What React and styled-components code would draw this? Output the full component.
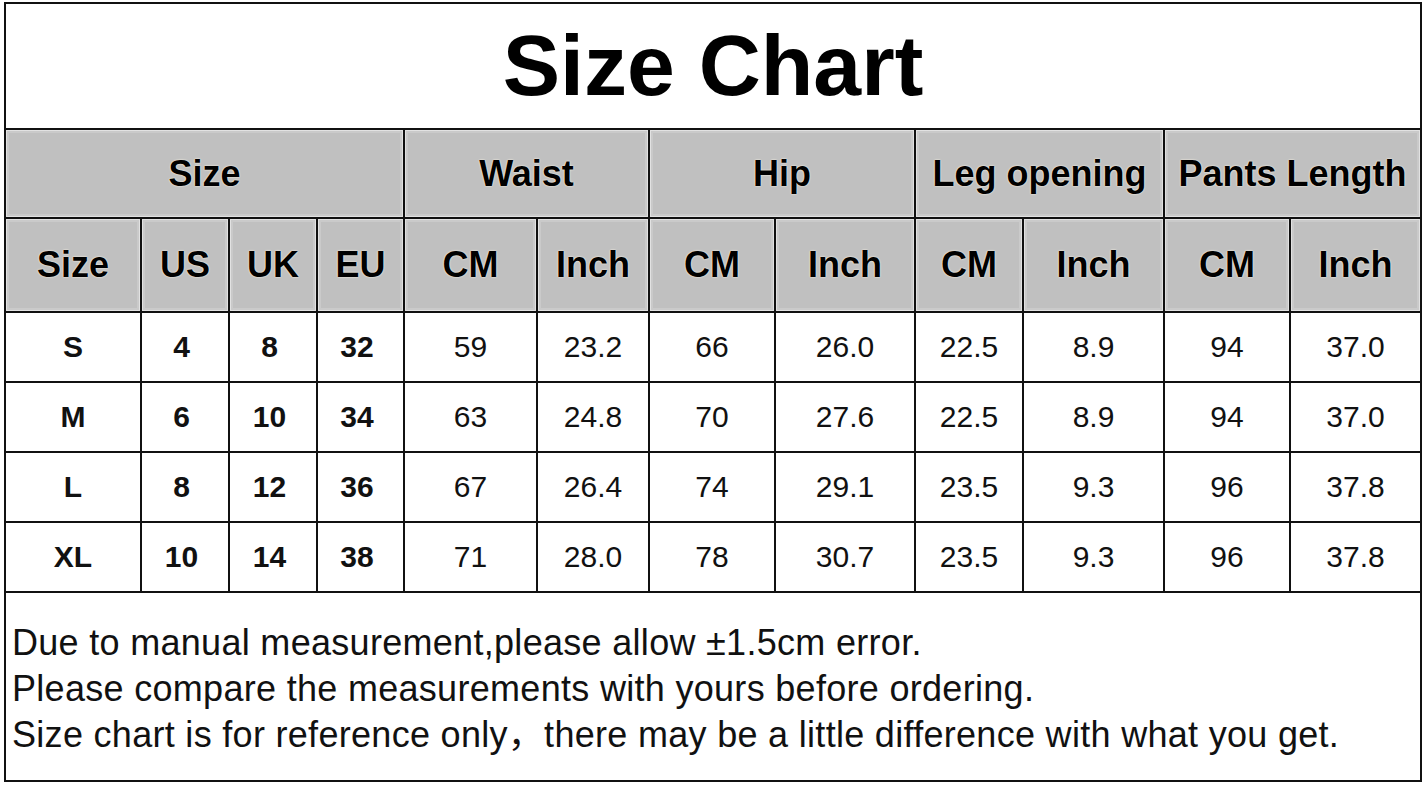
import React from 'react';
import styled, { createGlobalStyle } from 'styled-components';

const GlobalStyle = createGlobalStyle`
  html, body {
    margin: 0;
    padding: 0;
    background: #fff;
  }
  body {
    font-family: "Liberation Sans", Arial, "Noto Sans CJK SC", sans-serif;
    color: #000;
  }
`;

const Chart = styled.div`
  width: 1414px;
  margin: 2px 0 0 4px;
  border: 2px solid #111;
  background: #fff;
`;

const Title = styled.h1`
  margin: 0;
  height: 124px;
  display: flex;
  align-items: center;
  justify-content: center;
  font-size: 86px;
  font-weight: 700;
  padding-bottom: 2px;
  box-sizing: border-box;
`;

const Table = styled.div`
  display: grid;
  grid-template-columns: 134px 86px 86px 85px 131px 110px 124px 138px 106px 139px 124px 129px;
  grid-template-rows: 87px 92px 68px 68px 68px 68px;
  gap: 2px;
  background: #111;
  border-top: 2px solid #111;
  border-bottom: 2px solid #111;
`;

const HeadCell = styled.div`
  grid-column: span ${(p) => p.span || 1};
  display: flex;
  align-items: center;
  justify-content: center;
  background: #c0c0c0;
  box-shadow: inset 0 0 0 1px #e2e2e2, inset 0 0 0 3px #cacaca;
  font-size: 36px;
  font-weight: 700;
  white-space: nowrap;
  text-shadow: 0 0 2px #fff6e6, 0 0 1px #fff6e6;
`;

const Cell = styled.div`
  display: flex;
  align-items: center;
  justify-content: center;
  padding-right: ${(p) => (p.nudge ? '7px' : '0')};
  background: #fff;
  font-size: 30px;
  font-weight: ${(p) => (p.bold ? 700 : 400)};
  color: #111;
`;

const Notes = styled.div`
  height: 187px;
  display: flex;
  flex-direction: column;
  justify-content: center;
  padding: 4px 0 0 6px;
  box-sizing: border-box;
  font-size: 36px;
  line-height: 46px;
  letter-spacing: 0.3px;
  color: #111;
  white-space: nowrap;
`;

const groups = [
  ['Size', 4],
  ['Waist', 2],
  ['Hip', 2],
  ['Leg opening', 2],
  ['Pants Length', 2],
];

const subHeads = ['Size', 'US', 'UK', 'EU', 'CM', 'Inch', 'CM', 'Inch', 'CM', 'Inch', 'CM', 'Inch'];

const rows = [
  ['S', '4', '8', '32', '59', '23.2', '66', '26.0', '22.5', '8.9', '94', '37.0'],
  ['M', '6', '10', '34', '63', '24.8', '70', '27.6', '22.5', '8.9', '94', '37.0'],
  ['L', '8', '12', '36', '67', '26.4', '74', '29.1', '23.5', '9.3', '96', '37.8'],
  ['XL', '10', '14', '38', '71', '28.0', '78', '30.7', '23.5', '9.3', '96', '37.8'],
];

export default function App() {
  return (
    <>
      <GlobalStyle />
      <Chart>
        <Title>Size Chart</Title>
        <Table>
          {groups.map(([label, span]) => (
            <HeadCell key={label} span={span}>
              {label}
            </HeadCell>
          ))}
          {subHeads.map((label, i) => (
            <HeadCell key={'s' + i}>{label}</HeadCell>
          ))}
          {rows.map((row) =>
            row.map((value, i) => (
              <Cell key={row[0] + i} bold={i < 4} nudge={i > 0 && i < 4}>
                {value}
              </Cell>
            ))
          )}
        </Table>
        <Notes>
          <div>Due to manual measurement,please allow ±1.5cm error.</div>
          <div>Please compare the measurements with yours before ordering.</div>
          <div>Size chart is for reference only，there may be a little difference with what you get.</div>
        </Notes>
      </Chart>
    </>
  );
}
